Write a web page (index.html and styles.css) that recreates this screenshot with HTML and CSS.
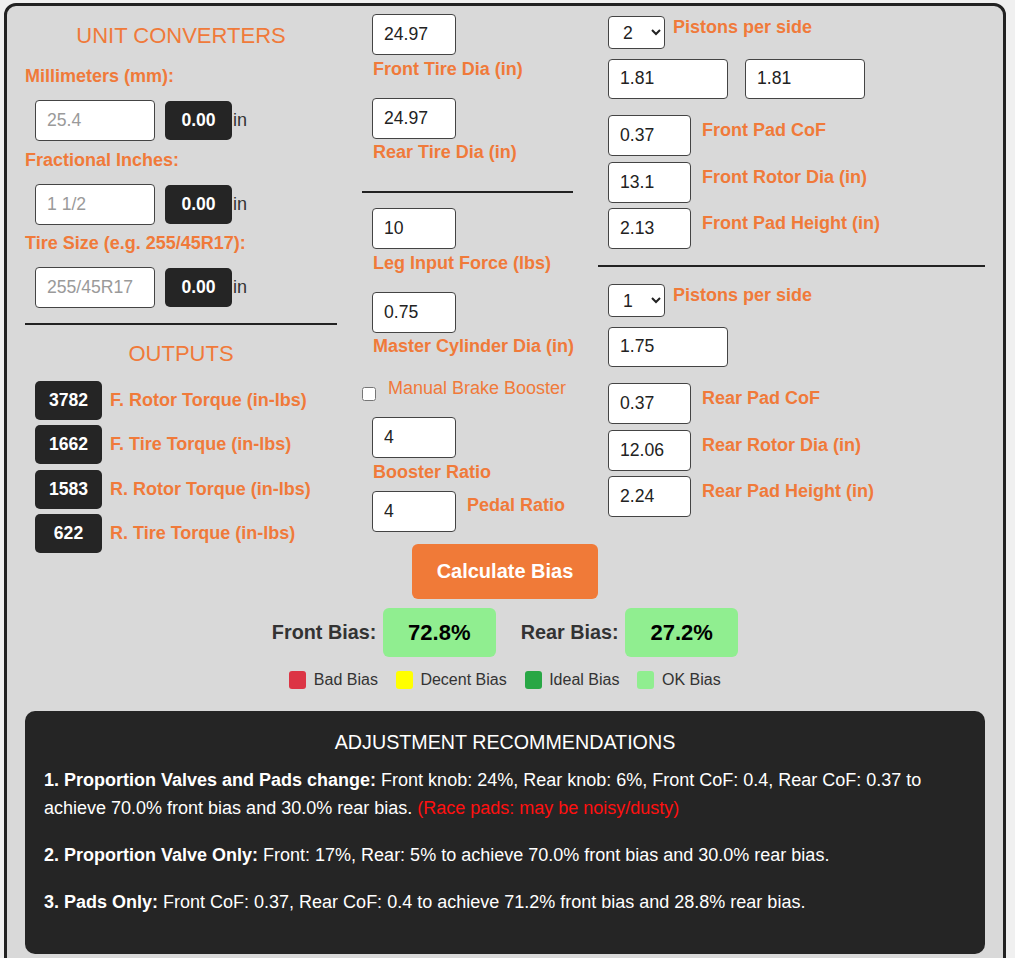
FILE: index.html
```html
<!DOCTYPE html>
<html lang="en">
<head>
<meta charset="utf-8">
<title>Brake Bias Calculator</title>
<link rel="stylesheet" href="styles.css">
</head>
<body>
<div class="calc">
  <div class="grid">
    <div class="col col-left">
      <h2 class="section-title">UNIT CONVERTERS</h2>
      <div class="conv-label first">Millimeters (mm):</div>
      <div class="conv-row">
        <input class="inp conv-input" type="text" placeholder="25.4">
        <div class="conv-out">0.00</div><span class="unit">in</span>
      </div>
      <div class="conv-label">Fractional Inches:</div>
      <div class="conv-row">
        <input class="inp conv-input" type="text" placeholder="1 1/2">
        <div class="conv-out">0.00</div><span class="unit">in</span>
      </div>
      <div class="conv-label">Tire Size (e.g. 255/45R17):</div>
      <div class="conv-row">
        <input class="inp conv-input" type="text" placeholder="255/45R17">
        <div class="conv-out">0.00</div><span class="unit">in</span>
      </div>
      <div class="rule rule-left"></div>
      <h2 class="section-title outputs-title">OUTPUTS</h2>
      <div class="out-list">
        <div class="out-row"><div class="out-box">3782</div><span class="out-label">F. Rotor Torque (in-lbs)</span></div>
        <div class="out-row"><div class="out-box">1662</div><span class="out-label">F. Tire Torque (in-lbs)</span></div>
        <div class="out-row"><div class="out-box">1583</div><span class="out-label">R. Rotor Torque (in-lbs)</span></div>
        <div class="out-row"><div class="out-box">622</div><span class="out-label">R. Tire Torque (in-lbs)</span></div>
      </div>
    </div>

    <div class="col col-mid">
      <div class="mfield f1">
        <input class="inp mid-input" type="text" value="24.97">
        <div class="mlabel">Front Tire Dia (in)</div>
      </div>
      <div class="mfield">
        <input class="inp mid-input" type="text" value="24.97">
        <div class="mlabel">Rear Tire Dia (in)</div>
      </div>
      <div class="rule rule-mid"></div>
      <div class="mfield f3">
        <input class="inp mid-input" type="text" value="10">
        <div class="mlabel">Leg Input Force (lbs)</div>
      </div>
      <div class="mfield">
        <input class="inp mid-input" type="text" value="0.75">
        <div class="mlabel">Master Cylinder Dia (in)</div>
      </div>
      <label class="check-row">
        <input class="check" type="checkbox">
        <span class="check-label">Manual Brake Booster</span>
      </label>
      <div class="mfield f5">
        <input class="inp mid-input" type="text" value="4">
        <div class="mlabel">Booster Ratio</div>
      </div>
      <div class="mfield-inline">
        <input class="inp mid-input" type="text" value="4">
        <div class="mlabel-inline">Pedal Ratio</div>
      </div>
    </div>

    <div class="col col-right">
      <div class="sel-row first">
        <select class="sel"><option>1</option><option selected>2</option><option>3</option></select>
        <span class="rlabel sel-label">Pistons per side</span>
      </div>
      <div class="piston-row">
        <input class="inp wide-input" type="text" value="1.81">
        <input class="inp wide-input" type="text" value="1.81">
      </div>
      <div class="rfield gap-big">
        <input class="inp small-input" type="text" value="0.37">
        <span class="rlabel">Front Pad CoF</span>
      </div>
      <div class="rfield">
        <input class="inp small-input" type="text" value="13.1">
        <span class="rlabel">Front Rotor Dia (in)</span>
      </div>
      <div class="rfield">
        <input class="inp small-input" type="text" value="2.13">
        <span class="rlabel">Front Pad Height (in)</span>
      </div>
      <div class="rule rule-right"></div>
      <div class="sel-row second">
        <select class="sel"><option selected>1</option><option>2</option><option>3</option></select>
        <span class="rlabel sel-label">Pistons per side</span>
      </div>
      <div class="piston-row">
        <input class="inp wide-input" type="text" value="1.75">
      </div>
      <div class="rfield gap-big">
        <input class="inp small-input" type="text" value="0.37">
        <span class="rlabel">Rear Pad CoF</span>
      </div>
      <div class="rfield">
        <input class="inp small-input" type="text" value="12.06">
        <span class="rlabel">Rear Rotor Dia (in)</span>
      </div>
      <div class="rfield">
        <input class="inp small-input" type="text" value="2.24">
        <span class="rlabel">Rear Pad Height (in)</span>
      </div>
    </div>
  </div>

  <button class="calc-btn" type="button">Calculate Bias</button>

  <div class="bias-row">
    <div class="bias-group">
      <span class="bias-label">Front Bias:</span>
      <div class="bias-value">72.8%</div>
    </div>
    <div class="bias-group">
      <span class="bias-label">Rear Bias:</span>
      <div class="bias-value">27.2%</div>
    </div>
  </div>

  <div class="legend">
    <div class="legend-item"><span class="swatch bad"></span>Bad Bias</div>
    <div class="legend-item"><span class="swatch decent"></span>Decent Bias</div>
    <div class="legend-item"><span class="swatch ideal"></span>Ideal Bias</div>
    <div class="legend-item"><span class="swatch ok"></span>OK Bias</div>
  </div>

  <div class="recs">
    <h3 class="recs-title">ADJUSTMENT RECOMMENDATIONS</h3>
    <p><strong>1. Proportion Valves and Pads change:</strong> Front knob: 24%, Rear knob: 6%, Front CoF: 0.4, Rear CoF: 0.37 to achieve 70.0% front bias and 30.0% rear bias. <span class="warn">(Race pads: may be noisy/dusty)</span></p>
    <p><strong>2. Proportion Valve Only:</strong> Front: 17%, Rear: 5% to achieve 70.0% front bias and 30.0% rear bias.</p>
    <p class="last"><strong>3. Pads Only:</strong> Front CoF: 0.37, Rear CoF: 0.4 to achieve 71.2% front bias and 28.8% rear bias.</p>
  </div>
</div>
</body>
</html>
```

FILE: styles.css
```css
* { box-sizing: border-box; }

html, body {
  margin: 0;
  padding: 0;
  background: #f0f0f0;
  font-family: "Liberation Sans", Arial, sans-serif;
  font-size: 16px;
  color: #333;
}

.calc {
  margin: 3px 9px 0 4px;
  border: 3px solid #222;
  border-radius: 12px;
  background: #d9d9d9;
  padding: 0 18px 30px;
}

.grid {
  display: grid;
  grid-template-columns: 312px 211px 387px;
  column-gap: 25px;
  align-items: start;
}

.col { display: flex; flex-direction: column; }

/* generic input */
.inp {
  display: block;
  height: 41px;
  border: 1px solid #444;
  border-radius: 4px;
  background: #fff;
  font-family: "Liberation Sans", Arial, sans-serif;
  font-size: 17.6px;
  color: #222;
  padding: 0 0 0 11px;
  outline: none;
}
.inp::placeholder { color: #9a9a9a; }

.rule { height: 2px; background: #222; }

/* left column */
.col-left { margin-bottom: -22px; }

.section-title {
  margin: 17px 0 0;
  font-size: 22px;
  line-height: 26px;
  font-weight: normal;
  text-align: center;
  color: #f07a3a;
}

.conv-label {
  margin-top: 8.5px;
  line-height: 20px;
  font-size: 18px;
  font-weight: bold;
  color: #f07a3a;
}
.conv-label.first { margin-top: 17px; }

.conv-row {
  display: flex;
  align-items: center;
  margin: 14px 0 0 10px;
}
.conv-input { width: 120px; }
.conv-out {
  width: 67px;
  height: 39px;
  margin-left: 10px;
  background: #252525;
  color: #fff;
  border-radius: 5px;
  font-weight: bold;
  font-size: 17.6px;
  display: flex;
  align-items: center;
  justify-content: center;
}
.unit {
  font-size: 18px;
  color: #333;
  padding-left: 1px;
}

.rule-left { margin-top: 15px; }
.outputs-title { margin-top: 16px; }

.out-list {
  display: flex;
  flex-direction: column;
  gap: 5.3px;
  margin: 14px 0 0 10px;
}
.out-row {
  display: flex;
  align-items: center;
  gap: 8px;
}
.out-box {
  width: 67px;
  height: 39px;
  background: #252525;
  color: #fff;
  border-radius: 5px;
  font-weight: bold;
  font-size: 17.6px;
  display: flex;
  align-items: center;
  justify-content: center;
}
.out-label {
  font-size: 18px;
  font-weight: bold;
  color: #f07a3a;
}

/* middle column */
.mid-input { width: 84px; margin-left: 10px; }

.mfield { margin-top: 19px; }
.mfield.f1 { margin-top: 8px; }
.mfield.f3 { margin-top: 15px; }
.mfield.f5 { margin-top: 16px; }

.mlabel {
  margin: 3.5px 0 0 11px;
  line-height: 20px;
  font-size: 18px;
  font-weight: bold;
  color: #f07a3a;
  white-space: nowrap;
}

.rule-mid { margin-top: 29px; }

.check-row {
  display: flex;
  align-items: flex-start;
  margin-top: 22px;
}
.check {
  width: 14px;
  height: 14px;
  margin: 9px 0 0 0;
}
.check-label {
  margin-left: 12px;
  line-height: 20px;
  font-size: 18px;
  color: #f07a3a;
}

.mfield-inline {
  display: flex;
  align-items: flex-start;
  margin-top: 9px;
}
.mlabel-inline {
  margin: 4.5px 0 0 11px;
  line-height: 20px;
  font-size: 18px;
  font-weight: bold;
  color: #f07a3a;
}

/* right column */
.sel-row {
  display: flex;
  align-items: flex-start;
}
.sel-row.first { margin-top: 10px; }
.sel-row.second { margin-top: 17px; }

.sel {
  width: 57px;
  height: 33px;
  margin-left: 10px;
  border: 1px solid #444;
  border-radius: 4px;
  background-color: #fff;
  font-family: "Liberation Sans", Arial, sans-serif;
  font-size: 17.6px;
  color: #222;
  padding: 0 0 0 10px;
}

.rlabel {
  line-height: 20px;
  font-size: 18px;
  font-weight: bold;
  color: #f07a3a;
  white-space: nowrap;
}
.sel-label { margin: 1px 0 0 8px; }

.piston-row {
  display: flex;
  gap: 17px;
  margin: 9.5px 0 0 10px;
}
.wide-input { width: 120px; height: 40.5px; }

.rfield {
  display: flex;
  align-items: flex-start;
  margin: 5.5px 0 0 10px;
}
.rfield.gap-big { margin-top: 16px; }
.small-input { width: 83px; }
.rfield .rlabel { margin: 5px 0 0 11px; }

.rule-right { margin-top: 16px; }

/* button + bias */
.calc-btn {
  display: block;
  margin: 12.5px auto 0;
  width: 186px;
  height: 55px;
  border: none;
  border-radius: 6px;
  background: #f07a38;
  color: #fff;
  font-family: "Liberation Sans", Arial, sans-serif;
  font-size: 20px;
  font-weight: bold;
}

.bias-row {
  display: flex;
  justify-content: center;
  align-items: center;
  gap: 25px;
  margin-top: 9px;
}
.bias-group {
  display: flex;
  align-items: center;
  gap: 6.5px;
}
.bias-label {
  font-size: 19.8px;
  font-weight: bold;
  color: #333;
}
.bias-value {
  width: 113px;
  height: 49px;
  border-radius: 6px;
  background: #90ee90;
  color: #000;
  font-size: 22px;
  font-weight: bold;
  display: flex;
  align-items: center;
  justify-content: center;
}

.legend {
  display: flex;
  justify-content: center;
  gap: 18px;
  margin-top: 14px;
}
.legend-item {
  display: flex;
  align-items: center;
  gap: 7.5px;
  font-size: 16px;
  line-height: 18px;
  color: #333;
}
.swatch {
  width: 17px;
  height: 18px;
  border-radius: 3px;
}
.swatch.bad { background: #dc3545; }
.swatch.decent { background: #ffff00; }
.swatch.ideal { background: #28a745; }
.swatch.ok { background: #90ee90; }

/* recommendations */
.recs {
  margin-top: 22px;
  background: #252525;
  color: #fff;
  border-radius: 10px;
  padding: 20px 19px;
}
.recs-title {
  margin: 0 0 12px;
  font-size: 19.7px;
  line-height: 23px;
  font-weight: normal;
  text-align: center;
}
.recs p {
  margin: 0 0 19px;
  font-size: 18px;
  line-height: 28px;
}
.recs p.last { margin-bottom: 18px; }
.warn { color: #ff1010; }
```
